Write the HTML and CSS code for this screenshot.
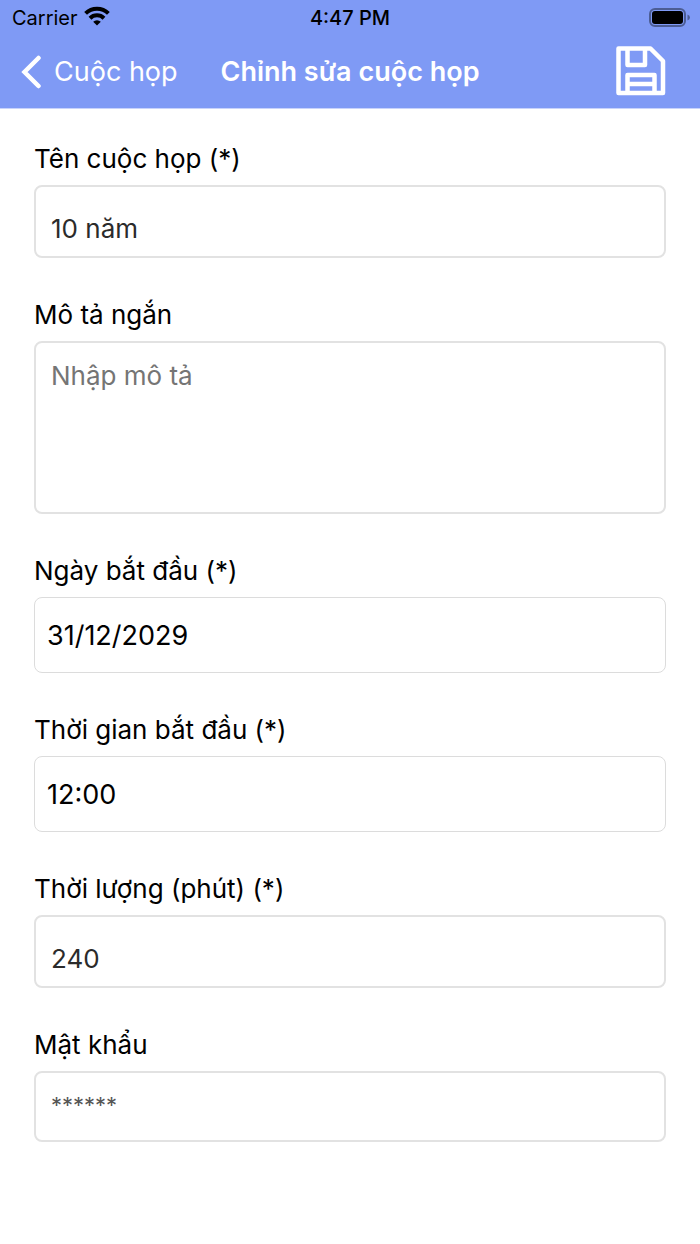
FILE: index.html
```html
<!DOCTYPE html>
<html lang="vi">
<head>
<meta charset="utf-8">
<meta name="viewport" content="width=device-width, initial-scale=1">
<title>Chỉnh sửa cuộc họp</title>
<link rel="stylesheet" href="styles.css">
</head>
<body>
<header class="header">
  <div class="status">
    <div class="carrier">
      <span>Carrier</span>
      <svg width="26" height="20" viewBox="0 0 26 20" aria-hidden="true">
        <g fill="none" stroke="#000" stroke-width="4">
          <path d="M1.600 7.400a16.200 16.200 0 0 1 22.800 0"/>
          <path d="M6 12.200a10 10 0 0 1 14 0"/>
        </g>
        <path d="M9.200 15.800a5.400 5.400 0 0 1 7.600 0L13 19.600z"/>
      </svg>
    </div>
    <time class="clock">4:47 PM</time>
    <svg class="battery" width="41" height="19" viewBox="0 0 41 19" aria-hidden="true">
      <rect x="1" y="1" width="35" height="17" rx="5" fill="none" stroke="#4c5d94" stroke-width="2"/>
      <rect x="3" y="3" width="31" height="13" rx="3"/>
      <path d="M38.500 6.500q2.500 1 2.500 3t-2.500 3z" fill="#4c5d94"/>
    </svg>
  </div>
  <nav class="navbar">
    <a class="back" href="#">
      <svg width="22" height="34" viewBox="0 0 22 34" aria-hidden="true"><path d="M18.500 3 4.500 17l14 14" fill="none" stroke="#fff" stroke-width="4.500" stroke-linecap="round" stroke-linejoin="miter"/></svg>
      <span>Cuộc họp</span>
    </a>
    <h1 class="title">Chỉnh sửa cuộc họp</h1>
    <button class="save" type="submit" form="meeting" aria-label="Lưu">
      <svg width="50" height="50" viewBox="0 0 50 50" fill="none" stroke="#fff" stroke-width="4.500" stroke-linejoin="round" aria-hidden="true">
        <path d="M2.500 2.500h32l12.500 12.500v32H2.500z"/>
        <path d="M11.500 2.500v16.500h17.500V2.500M11.500 47V29h27v18M11.500 38h27"/>
      </svg>
    </button>
  </nav>
</header>
<main>
  <form class="form" id="meeting">
    <div class="field">
      <label for="name">Tên cuộc họp (*)</label>
      <input class="box text" id="name" type="text" value="10 năm">
    </div>
    <div class="field">
      <label for="desc">Mô tả ngắn</label>
      <textarea class="box area" id="desc" placeholder="Nhập mô tả"></textarea>
    </div>
    <div class="field">
      <label for="date">Ngày bắt đầu (*)</label>
      <input class="box picker" id="date" type="text" value="31/12/2029">
    </div>
    <div class="field">
      <label for="time">Thời gian bắt đầu (*)</label>
      <input class="box picker" id="time" type="text" value="12:00">
    </div>
    <div class="field">
      <label for="length">Thời lượng (phút) (*)</label>
      <input class="box text" id="length" type="text" inputmode="numeric" value="240">
    </div>
    <div class="field">
      <label for="password">Mật khẩu</label>
      <input class="box password" id="password" type="password" placeholder="******">
    </div>
  </form>
</main>
</body>
</html>
```
FILE: styles.css
```css
* { box-sizing: border-box; }

body {
  margin: 0;
  background: #fff;
  color: #000;
  font-family: Inter, "Noto Sans", sans-serif;
  font-size: 26px;
  line-height: 32px;
}

.header {
  background: #7f9af5;
  border-bottom: 1px solid #c8d3fb;
}

.status {
  display: grid;
  grid-template-columns: 1fr auto 1fr;
  align-items: center;
  height: 36px;
  padding: 0 10px;
  font-size: 20px;
  line-height: 24px;
}

.carrier {
  display: flex;
  align-items: center;
  gap: 6px;
  padding-left: 2px;
}

.carrier svg { margin-bottom: 4px; }

.clock { font-weight: 500; }

.battery {
  justify-self: end;
  margin-bottom: 2px;
}

.navbar {
  display: grid;
  grid-template-columns: 1fr auto 1fr;
  align-items: center;
  height: 72px;
  padding: 0 20px;
  font-size: 27px;
}

.back {
  display: flex;
  align-items: center;
  gap: 12px;
  color: #fff;
  text-decoration: none;
  white-space: nowrap;
}

.title {
  margin: 0;
  color: #fff;
  font-size: inherit;
  font-weight: 600;
  white-space: nowrap;
}

.save {
  display: flex;
  justify-self: end;
  padding: 0 14px 2px 0;
  border: 0;
  background: none;
}

.form {
  display: flex;
  flex-direction: column;
  gap: 41px;
  padding: 34px;
}

.field {
  display: flex;
  flex-direction: column;
  gap: 10px;
}

.box {
  display: block;
  width: 100%;
  margin: 0;
  border: 2px solid #e2e2e2;
  border-radius: 8px;
  background: #fff;
  color: #2b2b2b;
  font: inherit;
  outline: none;
  resize: none;
}

.box::placeholder {
  color: #757575;
  opacity: 1;
}

.text {
  height: 73px;
  padding: 13px 15px 0;
}

.area {
  height: 173px;
  padding: 17px 15px;
}

.picker {
  height: 76px;
  padding: 0 12px;
  border-width: 1px;
  border-color: #dcdcdc;
  color: #000;
  font-size: 27px;
}

.password {
  height: 71px;
  padding: 0 15px 4px;
  font-size: 22px;
}

.password::placeholder { color: #555; }
```
